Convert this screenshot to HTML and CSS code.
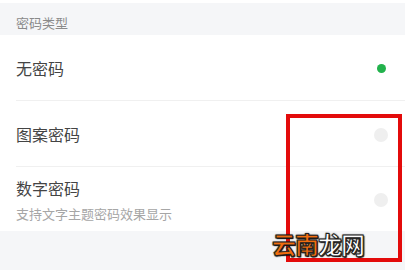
FILE: index.html
```html
<!DOCTYPE html>
<html lang="zh-CN">
<head>
  <meta charset="UTF-8" />
  <meta name="viewport" content="width=device-width, initial-scale=1.0" />
  <title>密码类型</title>
  <link rel="stylesheet" href="styles.css">
</head>
<body>
  <div class="section-title">密码类型</div>

  <div class="list">
    <div class="row">
      <div class="label">无密码</div>
      <span class="dot on"></span>
    </div>
    <div class="row">
      <div class="label">图案密码</div>
      <span class="dot"></span>
    </div>
    <div class="row last">
      <div class="text">
        <div class="label">数字密码</div>
        <div class="sub">支持文字主题密码效果显示</div>
      </div>
      <span class="dot"></span>
    </div>
  </div>

  <div class="footer"></div>

  <div class="mark-box"></div>
  <div class="watermark"><span class="orange">云南</span>龙网</div>
</body>
</html>
```

FILE: styles.css
```css
body {
  margin: 0;
  padding-top: 3px;
  background: #fff;
  font-family: "Noto Sans CJK SC", "Noto Sans", sans-serif;
  height: 270px;
  overflow: hidden;
  position: relative;
}
.section-title {
  height: 25px;
  line-height: 25px;
  padding: 7px 0 0 16px;
  background: #f5f6f8;
  color: #8a8a8a;
  font-size: 13px;
}
.list {
  padding-left: 16px;
}
.row {
  height: 65px;
  display: flex;
  align-items: center;
  justify-content: space-between;
  padding-right: 17px;
  border-bottom: 1px solid #f0f0f0;
}
.row.last {
  height: 64px;
  border-bottom: none;
}
.label {
  font-size: 16px;
  color: #444;
}
.sub {
  font-size: 13px;
  color: #a6a6a6;
  margin-top: 4px;
}
.dot {
  width: 14px;
  height: 14px;
  border-radius: 50%;
  background: #efefef;
  margin-top: 2px;
}
.dot.on {
  width: 9px;
  height: 9px;
  margin-right: 2px;
  background: #22b24c;
}
.footer {
  height: 40px;
  background: #f5f6f8;
}
.mark-box {
  position: absolute;
  left: 286px;
  top: 114px;
  width: 108px;
  height: 140px;
  border: 4px solid #e30b0b;
}
.watermark {
  position: absolute;
  left: 272px;
  top: 226px;
  font-size: 24px;
  font-weight: bold;
  color: #fff;
  letter-spacing: -1px;
  -webkit-text-stroke: 1px #222;
  text-shadow: 0 0 2px #000, 1px 1px 1px #000;
}
.orange {
  color: #f26d0f;
}
```
